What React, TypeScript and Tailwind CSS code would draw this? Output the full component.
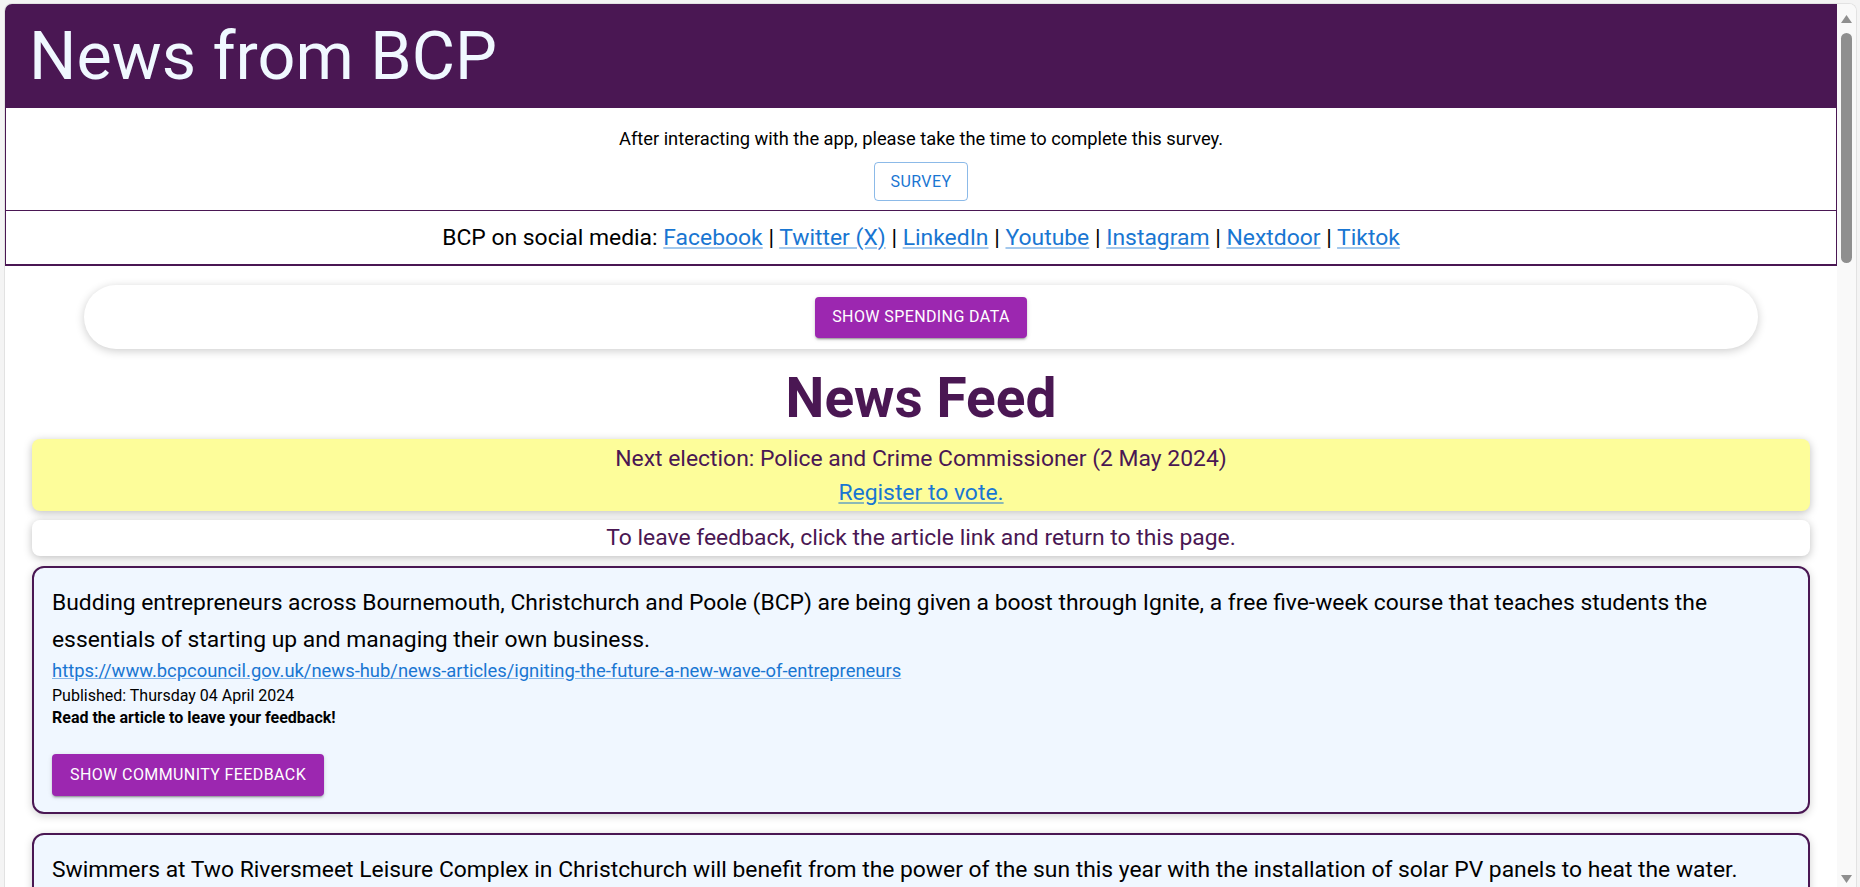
const socials = ["Facebook", "Twitter (X)", "LinkedIn", "Youtube", "Instagram", "Nextdoor", "Tiktok"];

const articles = [
  {
    text: "Budding entrepreneurs across Bournemouth, Christchurch and Poole (BCP) are being given a boost through Ignite, a free five-week course that teaches students the essentials of starting up and managing their own business.",
    url: "https://www.bcpcouncil.gov.uk/news-hub/news-articles/igniting-the-future-a-new-wave-of-entrepreneurs",
    published: "Thursday 04 April 2024",
  },
  {
    text: "Swimmers at Two Riversmeet Leisure Complex in Christchurch will benefit from the power of the sun this year with the installation of solar PV panels to heat the water.",
    url: "https://www.bcpcouncil.gov.uk/news-hub/news-articles/solar-panels-to-heat-the-pool-at-two-riversmeet",
    published: "Wednesday 03 April 2024",
  },
];

const ArticleCard = ({ text, url, published }: { text: string; url: string; published: string }) => {
  return (
    <div className="rounded-[12px] border-2 border-[#4a1753] bg-[#f0f7ff] px-[18px] pt-4 pb-[16px] shadow-[0_2px_8px_rgba(0,0,0,0.18)]">
      <p className="text-[22.85px] leading-[37px] text-black">{text}</p>
      <a href="#" className="mt-[1px] block text-[18.4px] leading-[24px] text-[#1976d2] underline decoration-[rgba(25,118,210,0.5)]">
        {url}
      </a>
      <p className="mt-[2px] text-[16px] leading-[22px] text-black">Published: {published}</p>
      <p className="text-[16px] leading-[22px] font-bold text-black">Read the article to leave your feedback!</p>
      <button className="mt-[25px] flex h-[42px] items-center rounded-[4px] bg-[#9c27b0] px-[18px] text-[16px] font-normal uppercase tracking-[0.4px] text-white shadow-[0_3px_1px_-2px_rgba(0,0,0,0.2),0_2px_2px_0_rgba(0,0,0,0.14),0_1px_5px_0_rgba(0,0,0,0.12)]">
        Show community feedback
      </button>
    </div>
  );
};

const App = () => {
  return (
    <div className="h-screen w-full overflow-hidden bg-[#f4f4f4] pt-[3px] pr-[3px] pl-[4px] font-['Roboto',sans-serif]">
      <div className="flex h-full overflow-hidden rounded-t-[8px] border-x border-t border-[#e2e2e2] bg-white">
        <main className="flex-1 overflow-hidden">
          <header className="flex h-[104px] items-center bg-[#4a1753] px-6">
            <h1 className="text-[66.5px] leading-none font-normal text-[#f0f8ff]">News from BCP</h1>
          </header>
          <div className="border-x border-b-2 border-[#4a1753]">
            <div className="flex h-[103px] flex-col items-center border-b border-[#4a1753] pt-[19px]">
              <p className="text-[18.3px] leading-[24px] text-black">
                After interacting with the app, please take the time to complete this survey.
              </p>
              <button className="mt-[11px] flex h-[39px] items-center rounded-[4px] border border-[rgba(25,118,210,0.5)] px-[16px] text-[16px] font-normal uppercase tracking-[0.4px] text-[#1976d2]">
                Survey
              </button>
            </div>
            <div className="flex h-[53px] items-center justify-center">
              <p className="text-center text-[22.9px] leading-[30px] text-black">
                BCP on social media:{" "}
                {socials.map((s, i) => (
                  <span key={s}>
                    <a href="#" className="text-[#1976d2] underline decoration-[rgba(25,118,210,0.4)] underline-offset-2">
                      {s}
                    </a>
                    {i < socials.length - 1 ? " | " : ""}
                  </span>
                ))}
              </p>
            </div>
          </div>

          <div className="mx-[79px] mt-[19px] flex h-[64px] items-center justify-center rounded-full bg-white shadow-[0_2px_10px_rgba(0,0,0,0.2)]">
            <button className="flex h-[41px] items-center rounded-[4px] bg-[#9c27b0] px-[17px] text-[16px] font-normal uppercase tracking-[0.4px] text-white shadow-[0_3px_1px_-2px_rgba(0,0,0,0.2),0_2px_2px_0_rgba(0,0,0,0.14),0_1px_5px_0_rgba(0,0,0,0.12)]">
              Show spending data
            </button>
          </div>

          <h2 className="mt-[22px] mb-[13px] text-center text-[55px] leading-none font-bold text-[#4a1753]">News Feed</h2>

          <div className="mx-[27px] flex flex-col">
            <div className="rounded-[8px] bg-[#fdfd9a] pt-[5px] pb-[3px] text-center text-[22.9px] text-[#4a1753] shadow-[0_2px_8px_rgba(0,0,0,0.25)]">
              <div className="leading-[30px]">Next election: Police and Crime Commissioner (2 May 2024)</div>
              <div className="mt-[4px] leading-[30px]">
                <a href="#" className="text-[#1976d2] underline decoration-[rgba(25,118,210,0.5)]">
                  Register to vote.
                </a>
              </div>
            </div>
            <div className="mt-[9px] rounded-[8px] bg-white py-[3px] text-center text-[22.9px] leading-[30px] text-[#4a1753] shadow-[0_2px_8px_rgba(0,0,0,0.25)]">
              To leave feedback, click the article link and return to this page.
            </div>
            <div className="mt-[10px] flex flex-col gap-[19px]">
              {articles.map((a) => (
                <ArticleCard key={a.url} {...a} />
              ))}
            </div>
          </div>
        </main>

        <div className="flex w-[19px] flex-col items-center bg-[#f9f9f9]">
          <svg width="11" height="8" viewBox="0 0 11 8" className="mt-[11px]">
            <path d="M5.5 0 L11 8 L0 8 Z" fill="#8f8f8f" />
          </svg>
          <div className="mt-[10px] h-[230px] w-[11px] rounded-full bg-[#8f8f8f]" />
          <div className="flex-1" />
          <svg width="11" height="8" viewBox="0 0 11 8" className="mb-[4px]">
            <path d="M0 0 L11 0 L5.5 8 Z" fill="#8f8f8f" />
          </svg>
        </div>
      </div>
    </div>
  );
};

export default App;
